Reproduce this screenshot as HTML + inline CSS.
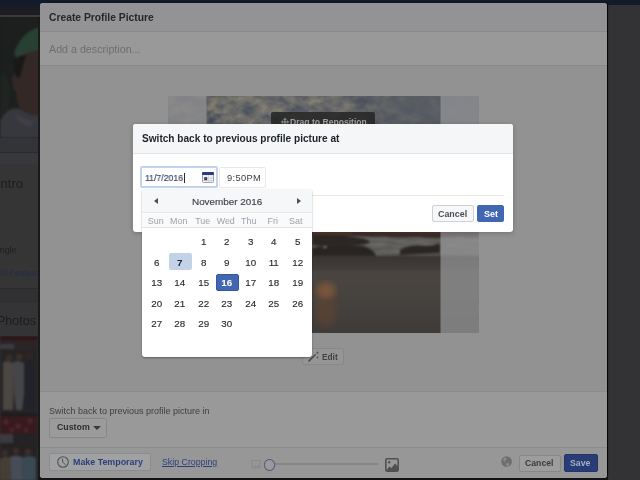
<!DOCTYPE html>
<html><head><meta charset="utf-8">
<style>
*{box-sizing:border-box;margin:0;padding:0}
html,body{width:640px;height:480px;overflow:hidden;background:#333335;font-family:"Liberation Sans",sans-serif}
.a{position:absolute}
.t{position:absolute;white-space:nowrap;line-height:1;will-change:transform}
.wd{position:absolute;top:217.2px;width:23.45px;text-align:center;font-size:8.9px;color:#9da1a8;line-height:1;will-change:transform}
.d{position:absolute;width:23.45px;text-align:center;font-size:9.8px;color:#2a2d33;line-height:1;will-change:transform;-webkit-text-stroke:.15px #2a2d33}
</style></head><body>
<!-- ===== page background ===== -->
<div class="a" style="left:0;top:0;width:640px;height:4.5px;background:#131a2c"></div>
<div class="a" style="left:0;top:4px;width:40px;height:12px;background:linear-gradient(#161a28,#1d1d21 60%)"></div>
<div class="a" style="left:0;top:15px;width:40px;height:2.5px;background:#3a3a3e"></div>
<svg class="a" style="left:0;top:17px" width="40" height="121" viewBox="0 0 40 121">
 <defs><filter color-interpolation-filters="sRGB" id="pb"><feGaussianBlur stdDeviation="1.3"/></filter></defs>
 <rect width="40" height="121" fill="#1c1e1c"/>
 <g filter="url(#pb)">
  <path d="M0 0H40V121H0Z" fill="#1d201d"/>
  <path d="M0 60 Q6 50 10 70 L8 100 L0 105Z" fill="#222622"/>
  <path d="M14 36 Q22 14 40 10 V34 Q28 36 18 44Z" fill="#2b4636"/>
  <path d="M16 42 Q26 34 40 33 V100 Q30 104 22 96 Q16 86 16 74 Q12 72 12 62 Q13 55 16 56Z" fill="#372b26"/>
  <path d="M14 44 Q18 38 26 38 L20 60 Q16 62 15 56Z" fill="#1a1816"/>
  <path d="M0 104 Q8 88 20 92 Q30 100 40 98 V121H0Z" fill="#3c3c42"/>
  <path d="M16 96 Q24 104 34 104 L30 110 Q20 106 16 100Z" fill="#46464c"/>
 </g>
 <rect width="40" height="121" fill="#1c1c1e" opacity=".12"/>
</svg>
<div class="a" style="left:0;top:138px;width:40px;height:14px;background:#343438"></div>
<div class="a" style="left:0;top:152px;width:40px;height:1px;background:#2a2a2e"></div>
<div class="a" style="left:0;top:153px;width:40px;height:11px;background:#37383c"></div>
<div class="a" style="left:0;top:164px;width:40px;height:124px;background:#353536"></div>
<div class="t" style="left:-3.5px;top:176.5px;font-size:13px;color:#1c1c1c">Intro</div>
<div class="t" style="left:-7.8px;top:246px;font-size:8.8px;color:#1e1e1f">Single</div>
<div class="t" style="left:-7.7px;top:269px;font-size:8.6px;color:#252c45">Add Featured</div>
<div class="a" style="left:0;top:288px;width:40px;height:1px;background:#2a2a2c"></div>
<div class="a" style="left:0;top:289px;width:40px;height:14px;background:#303032"></div>
<div class="a" style="left:0;top:303px;width:40px;height:35px;background:#343436"></div>
<div class="t" style="left:-3px;top:315px;font-size:12.5px;color:#1c1c1c">Photos</div>
<svg class="a" style="left:0;top:336px" width="38" height="144" viewBox="0 0 38 144">
 <defs><filter color-interpolation-filters="sRGB" id="pb2"><feGaussianBlur stdDeviation="1"/></filter></defs>
 <g filter="url(#pb2)">
 <rect x="0" y="0" width="38" height="77" fill="#262324"/>
 <rect x="0" y="0" width="38" height="4" fill="#2e1416"/>
 <rect x="0" y="4" width="38" height="10" fill="#2a2426"/>
 <rect x="0" y="8" width="14" height="5" fill="#3a3a3e"/>
 <circle cx="9" cy="22" r="3.5" fill="#3a2e2a"/><circle cx="19" cy="21" r="3.5" fill="#3a2e2a"/><circle cx="29" cy="20" r="3.5" fill="#302622"/>
 <path d="M3 26 Q9 24 14 28 L13 74 L3 74Z" fill="#4a4642"/>
 <path d="M13 26 Q19 24 24 27 L24 58 L22 74 L16 74 L14 58Z" fill="#46464a"/>
 <path d="M24 25 Q30 22 36 26 L36 74 L25 74Z" fill="#22232a"/>
 <rect x="0" y="77" width="38" height="3" fill="#1c1c1e"/>
 <rect x="0" y="80" width="38" height="64" fill="#262224"/>
 <rect x="0" y="80" width="38" height="18" fill="#361a1e"/>
 <circle cx="6" cy="86" r="3" fill="#4a2428"/><circle cx="18" cy="90" r="3" fill="#4a2428"/><circle cx="30" cy="85" r="3" fill="#4a2428"/><circle cx="12" cy="94" r="2.5" fill="#4a2428"/><circle cx="26" cy="94" r="2.5" fill="#4a2428"/>
 <rect x="0" y="98" width="38" height="12" fill="#242224"/>
 <rect x="0" y="98" width="13" height="9" fill="#3a3a40"/>
 <circle cx="5" cy="117" r="3.2" fill="#3a2e28"/><circle cx="16" cy="115" r="3.2" fill="#3a2e28"/><circle cx="28" cy="116" r="3.2" fill="#3a2e28"/>
 <path d="M0 123 Q5 119 10 122 L11 144 L0 144Z" fill="#463e36"/>
 <path d="M10 121 Q16 118 22 121 L23 144 L11 144Z" fill="#474c56"/>
 <path d="M22 122 Q29 118 36 122 L36 144 L23 144Z" fill="#3a4a54"/>
 </g>
</svg>
<div class="a" style="left:38px;top:17px;width:2px;height:463px;background:#1a1a1a"></div>
<div class="a" style="left:38px;top:477px;width:570px;height:3px;background:#141414"></div>

<!-- ===== main dialog (darkened) ===== -->
<div class="a" style="left:40px;top:3px;width:567px;height:474.5px;background:#999;border-radius:3px;box-shadow:1px 0 1px #000"></div>
<div class="a" style="left:40px;top:3px;width:567px;height:28.5px;background:#939396;border-radius:3px 3px 0 0;border-bottom:1px solid #8a8a8c"></div>
<div class="t" style="left:49px;top:12.7px;font-size:10.3px;font-weight:bold;color:#26272b">Create Profile Picture</div>
<div class="t" style="left:49px;top:43.8px;font-size:10.7px;color:#6e6e6e">Add a description...</div>
<div class="a" style="left:40px;top:65px;width:567px;height:1px;background:#888"></div>
<div class="a" style="left:40px;top:66px;width:567px;height:325.5px;background:#929292"></div>
<div class="a" style="left:40px;top:391px;width:567px;height:1px;background:#8b8b8b"></div>
<div class="t" style="left:49px;top:407px;font-size:9px;color:#3e3e3e">Switch back to previous profile picture in</div>
<!-- custom button -->
<div class="a" style="left:49px;top:417.5px;width:58px;height:20px;background:#9b9b9b;border:1px solid #878787;border-radius:2px"></div>
<div class="t" style="left:57px;top:423px;font-size:8.8px;font-weight:bold;color:#2e2f33">Custom</div>
<div class="a" style="left:93px;top:426px;width:0;height:0;border-left:4px solid transparent;border-right:4px solid transparent;border-top:4px solid #3a3a3c"></div>
<div class="a" style="left:40px;top:446.5px;width:567px;height:1px;background:#8b8b8b"></div>
<div class="a" style="left:40px;top:447.5px;width:567px;height:30px;background:#979797;border-radius:0 0 3px 3px"></div>
<!-- make temporary -->
<div class="a" style="left:49px;top:453px;width:101.5px;height:18px;background:#a0a1a3;border:1px solid #8c8c8e;border-radius:2px"></div>
<svg class="a" style="left:56.5px;top:456px" width="13" height="13" viewBox="0 0 13 13"><circle cx="6" cy="6" r="5.3" fill="none" stroke="#505156" stroke-width="1.1"/><path d="M5.3 2.6L5.9 6.2L8.4 8.8" fill="none" stroke="#505156" stroke-width="1"/></svg>
<div class="t" style="left:73px;top:458px;font-size:8.9px;font-weight:bold;color:#2d3f7a">Make Temporary</div>
<div class="t" style="left:162px;top:458px;font-size:8.8px;color:#2d3f7a;text-decoration:underline">Skip Cropping</div>
<!-- slider -->
<svg class="a" style="left:251px;top:459px" width="11" height="11" viewBox="0 0 11 11"><rect x="1" y="1.5" width="8" height="7.5" fill="none" stroke="#8a8a8a" stroke-width="1"/><path d="M1.5 8.5L4 6L6 7.5L8.5 5V8.5Z" fill="#8a8a8a"/></svg>
<div class="a" style="left:275px;top:463px;width:103px;height:2px;background:#858585"></div>
<div class="a" style="left:263.5px;top:459px;width:11.5px;height:11.5px;border-radius:50%;border:1.4px solid #4d5072;background:#9a9a9a;box-shadow:0 0 2px rgba(120,130,200,.35)"></div>
<svg class="a" style="left:385px;top:457.5px" width="14" height="14" viewBox="0 0 14 14"><rect x="0.8" y="0.8" width="12.4" height="12.4" rx="1.5" fill="none" stroke="#505050" stroke-width="1.6"/><circle cx="4.2" cy="4.2" r="1.2" fill="#505050"/><path d="M1 12.5L4.5 8.5L6.5 10L10 5.5L13 8.5V13H1Z" fill="#505050"/></svg>
<!-- globe -->
<svg class="a" style="left:501px;top:456px" width="12" height="12" viewBox="0 0 12 12"><circle cx="5.6" cy="5.6" r="5.3" fill="#6e6e70"/><path d="M2.2 3.2 Q3.5 1.2 5.5 1.6 L5 3.5 Q4.2 4.2 4.5 5.6 Q3 5.4 2.4 4.5Z" fill="#8c8c8e"/><path d="M5.3 7.4 Q7.2 6.6 8.2 8 Q7.8 10 6.2 10.6 Q5 9.5 5.3 7.4Z" fill="#8e8e90"/></svg>
<!-- cancel/save -->
<div class="a" style="left:519px;top:454.5px;width:42px;height:17px;background:#9d9d9d;border:1px solid #878787;border-radius:2px"></div>
<div class="t" style="left:525px;top:459px;font-size:8.7px;font-weight:bold;color:#3a3b3f">Cancel</div>
<div class="a" style="left:564px;top:454px;width:33.5px;height:17.5px;background:#283c75;border:1px solid #23346a;border-radius:2px"></div>
<div class="t" style="left:570px;top:459px;font-size:8.7px;font-weight:bold;color:#a9aec0">Save</div>

<!-- ===== photo ===== -->
<svg class="a" style="left:167.5px;top:96px" width="311.5" height="237" viewBox="0 0 311.5 237">
 <defs>
  <filter color-interpolation-filters="sRGB" id="cl" x="0" y="0" width="100%" height="100%"><feTurbulence type="fractalNoise" baseFrequency="0.08 0.11" numOctaves="3" seed="11"/><feColorMatrix type="matrix" values="0.45 0 0 0 0.163  0.357 0 0 0 0.213  0.16 0 0 0 0.312  0 0 0 0 1"/><feGaussianBlur stdDeviation=".7"/></filter>
  <filter color-interpolation-filters="sRGB" id="bl"><feGaussianBlur stdDeviation="1"/></filter>
  <filter color-interpolation-filters="sRGB" id="bl2"><feGaussianBlur stdDeviation="3"/></filter>
  <filter color-interpolation-filters="sRGB" id="sea" x="0" y="0" width="100%" height="100%"><feTurbulence type="fractalNoise" baseFrequency="0.05 0.2" numOctaves="2" seed="3"/><feColorMatrix type="matrix" values="0.12 0 0 0 0.32  0.12 0 0 0 0.315  0.12 0 0 0 0.305  0 0 0 0 1"/></filter>
  <linearGradient id="rfade" x1="0" x2="1" y1="0" y2="0"><stop offset="0" stop-color="#575b62" stop-opacity="0"/><stop offset=".5" stop-color="#575b62" stop-opacity=".75"/><stop offset="1" stop-color="#555a62" stop-opacity=".9"/></linearGradient>
  <linearGradient id="sand" x1="0" x2="0" y1="0" y2="1"><stop offset="0" stop-color="#383432"/><stop offset=".15" stop-color="#403b38"/><stop offset=".22" stop-color="#4a4541"/><stop offset=".5" stop-color="#47433f"/><stop offset="1" stop-color="#3e3b39"/></linearGradient>
  <radialGradient id="refl" cx=".45" cy=".35" r=".5" gradientTransform="translate(.5 .35) scale(1 1.3) translate(-.5 -.35)"><stop offset="0" stop-color="#8e5a36" stop-opacity=".85"/><stop offset=".5" stop-color="#74482e" stop-opacity=".5"/><stop offset="1" stop-color="#5a4030" stop-opacity="0"/></radialGradient>
 </defs>
 <rect x="0" y="0" width="311.5" height="237" fill="#44403c"/>
 <rect x="0" y="0" width="311.5" height="138" filter="url(#cl)"/>
 <rect x="150" y="0" width="161.5" height="138" fill="url(#rfade)"/>
 <ellipse cx="120" cy="12" rx="70" ry="22" fill="#8a8882" opacity=".18" filter="url(#bl2)"/>
 <rect x="0" y="139" width="311.5" height="22" filter="url(#sea)"/>
 <g filter="url(#bl)">
  <rect x="0" y="135" width="311.5" height="4.5" fill="#46302a"/>
  <rect x="144" y="135" width="40" height="4" fill="#5a3a2e" opacity=".6"/>
  <path d="M144 139 L311 139 L311 141 Q300 142 290 140.5 Q270 143 250 141 Q232 142 215 140.5 Q200 141 190 140 L144 141Z" fill="#302a28"/>
  <path d="M144 139 Q165 138 185 141 Q200 142 202 146 Q198 150 172 149 Q152 151 144 149Z" fill="#2c2725"/>
  <path d="M144 152 Q165 147 195 150 Q206 153 208 160 L144 161Z" fill="#282422"/>
  <path d="M232 154 Q240 148 258 150 Q268 150 270 147 Q273 149 272 157 L232 159Z" fill="#2b2624"/>
  <ellipse cx="157" cy="151" rx="2" ry="1" fill="#7e7c78"/>
  <rect x="0" y="159.5" width="311.5" height="77.5" fill="url(#sand)"/>
 </g>
 <ellipse cx="158" cy="212" rx="11" ry="20" fill="#6a4630" opacity=".45" filter="url(#bl2)"/>
 <ellipse cx="158" cy="194" rx="10" ry="8" fill="#93603a" opacity=".6" filter="url(#bl2)"/>
 <rect x="0" y="0" width="38.5" height="237" fill="#8c8c8e" opacity=".85"/>
 <rect x="272.5" y="0" width="38.5" height="237" fill="#98989b" opacity=".7"/>
</svg>
<!-- drag to reposition -->
<div class="a" style="left:270.5px;top:112px;width:104.5px;height:20px;background:rgba(34,34,34,.82);border-radius:2px"></div>
<svg class="a" style="left:280.5px;top:117.5px" width="8" height="8" viewBox="0 0 8 8"><path d="M4 0.5V7.5M0.5 4H7.5M4 0.5L2.6 2M4 0.5L5.4 2M4 7.5L2.6 6M4 7.5L5.4 6M0.5 4L2 2.6M0.5 4L2 5.4M7.5 4L6 2.6M7.5 4L6 5.4" stroke="#9a9a9a" stroke-width="1" fill="none"/></svg>
<div class="t" style="left:290px;top:117.6px;font-size:8.6px;font-weight:bold;color:#a2a2a2">Drag to Reposition</div>
<!-- edit button -->
<div class="a" style="left:301.5px;top:348px;width:42.5px;height:17.2px;background:#959595;border:1px solid #878787;border-radius:2px"></div>
<svg class="a" style="left:307px;top:351px" width="13" height="12" viewBox="0 0 13 12"><path d="M1.5 10.5L8.5 3.5" stroke="#454545" stroke-width="1.4"/><path d="M10.5 0.5v2.6M9.2 1.8h2.6M10.5 5.5v2M9.5 6.5h2" stroke="#555" stroke-width="0.8"/></svg>
<div class="t" style="left:322px;top:353px;font-size:8.3px;font-weight:bold;color:#404040">Edit</div>

<!-- ===== modal ===== -->
<div class="a" style="left:133px;top:124px;width:380px;height:107.5px;background:#fff;border-radius:3px;box-shadow:0 1px 5px rgba(0,0,0,.22)"></div>
<div class="a" style="left:133px;top:124px;width:380px;height:29.5px;background:#f5f6f7;border-radius:3px 3px 0 0;border-bottom:1px solid #e5e5e5"></div>
<div class="t" style="left:142px;top:134px;font-size:10.1px;font-weight:bold;color:#1d2129">Switch back to previous profile picture at</div>
<!-- date input -->
<div class="a" style="left:140px;top:166px;width:78px;height:22px;background:#fff;border:2.5px solid #c2d3ee;border-radius:2px"></div>
<div class="t" style="left:145px;top:173.2px;font-size:9.6px;color:#3e4668;-webkit-text-stroke:.2px #3e4668;transform:scaleX(.905);transform-origin:0 0">11/7/2016</div>
<div class="a" style="left:183.5px;top:172.5px;width:1px;height:10.5px;background:#2a2a2a"></div>
<svg class="a" style="left:201.5px;top:172px" width="12" height="11" viewBox="0 0 12 11"><rect x="0.5" y="0.5" width="11" height="10" rx="1" fill="#f4f5f8" stroke="#9a9eaa" stroke-width="1"/><rect x="0" y="0" width="12" height="3" rx="1" fill="#2e3b7a"/><path d="M1 6.2H11M1 8.5H11M4 3V10.5M6.5 3V10.5M9 3V10.5" stroke="#c9ccd6" stroke-width=".7"/><rect x="2.2" y="5.2" width="3" height="3" fill="#3a3f55"/></svg>
<!-- time input -->
<div class="a" style="left:219px;top:166.5px;width:47px;height:21.5px;background:#fff;border:1px solid #e8e8e8;border-radius:2px"></div>
<div class="t" style="left:227.3px;top:173.6px;font-size:9.3px;color:#3a3d42;letter-spacing:.35px">9:50PM</div>
<div class="a" style="left:142px;top:195px;width:362px;height:1px;background:#e9e6de"></div>
<!-- modal buttons -->
<div class="a" style="left:432px;top:205px;width:41.5px;height:17px;background:#f6f7f9;border:1px solid #ced0d4;border-radius:2px"></div>
<div class="t" style="left:438px;top:209.5px;font-size:8.9px;font-weight:bold;color:#4b4f56">Cancel</div>
<div class="a" style="left:476.5px;top:205px;width:27.5px;height:17px;background:#4267b2;border:1px solid #4267b2;border-radius:2px"></div>
<div class="t" style="left:483.5px;top:209.5px;font-size:9px;font-weight:bold;color:#fff">Set</div>

<!-- ===== date picker popup ===== -->
<div class="a" style="left:142px;top:189px;width:170.4px;height:167.8px;background:#fff;border-radius:3px;box-shadow:0 1px 2px rgba(0,0,0,.35)"></div>
<div class="a" style="left:142px;top:189px;width:170.4px;height:24px;background:#f6f7f9;border-bottom:1px solid #e5e5e5;border-radius:3px 3px 0 0"></div>
<div class="a" style="left:142px;top:213.5px;width:170.4px;height:14.5px;background:#f9fafb;border-bottom:1px solid #e5e5e5"></div>
<div class="a" style="left:154px;top:197.5px;width:0;height:0;border-top:3px solid transparent;border-bottom:3px solid transparent;border-right:4.5px solid #4b4f56"></div>
<div class="a" style="left:296.5px;top:197.5px;width:0;height:0;border-top:3px solid transparent;border-bottom:3px solid transparent;border-left:4.5px solid #4b4f56"></div>
<div class="t" style="left:192px;top:196.5px;font-size:9.9px;color:#3f434a;-webkit-text-stroke:.15px #3f434a">November 2016</div>
<div class="wd" style="left:144.15px">Sun</div>
<div class="wd" style="left:167.45px">Mon</div>
<div class="wd" style="left:190.75px">Tue</div>
<div class="wd" style="left:214.05px">Wed</div>
<div class="wd" style="left:237.35px">Thu</div>
<div class="wd" style="left:260.65px">Fri</div>
<div class="wd" style="left:283.95px">Sat</div>
<div class="a" style="left:169px;top:253px;width:23px;height:17px;background:#c4d2e8;border-radius:2px"></div>
<div class="a" style="left:216px;top:274px;width:22.5px;height:17px;background:#4267b2;border:1px solid #365899;border-radius:2px"></div>
<div class="d" style="left:191.90px;top:237.0px">1</div>
<div class="d" style="left:215.35px;top:237.0px">2</div>
<div class="d" style="left:238.80px;top:237.0px">3</div>
<div class="d" style="left:262.25px;top:237.0px">4</div>
<div class="d" style="left:285.70px;top:237.0px">5</div>
<div class="d" style="left:145.00px;top:257.5px">6</div>
<div class="d" style="left:168.45px;top:257.5px;font-weight:bold;color:#1d2129;-webkit-text-stroke:0">7</div>
<div class="d" style="left:191.90px;top:257.5px">8</div>
<div class="d" style="left:215.35px;top:257.5px">9</div>
<div class="d" style="left:238.80px;top:257.5px">10</div>
<div class="d" style="left:262.25px;top:257.5px">11</div>
<div class="d" style="left:285.70px;top:257.5px">12</div>
<div class="d" style="left:145.00px;top:278.1px">13</div>
<div class="d" style="left:168.45px;top:278.1px">14</div>
<div class="d" style="left:191.90px;top:278.1px">15</div>
<div class="d" style="left:215.35px;top:278.1px;font-weight:bold;color:#fff;-webkit-text-stroke:0">16</div>
<div class="d" style="left:238.80px;top:278.1px">17</div>
<div class="d" style="left:262.25px;top:278.1px">18</div>
<div class="d" style="left:285.70px;top:278.1px">19</div>
<div class="d" style="left:145.00px;top:298.6px">20</div>
<div class="d" style="left:168.45px;top:298.6px">21</div>
<div class="d" style="left:191.90px;top:298.6px">22</div>
<div class="d" style="left:215.35px;top:298.6px">23</div>
<div class="d" style="left:238.80px;top:298.6px">24</div>
<div class="d" style="left:262.25px;top:298.6px">25</div>
<div class="d" style="left:285.70px;top:298.6px">26</div>
<div class="d" style="left:145.00px;top:319.2px">27</div>
<div class="d" style="left:168.45px;top:319.2px">28</div>
<div class="d" style="left:191.90px;top:319.2px">29</div>
<div class="d" style="left:215.35px;top:319.2px">30</div>
</body></html>
